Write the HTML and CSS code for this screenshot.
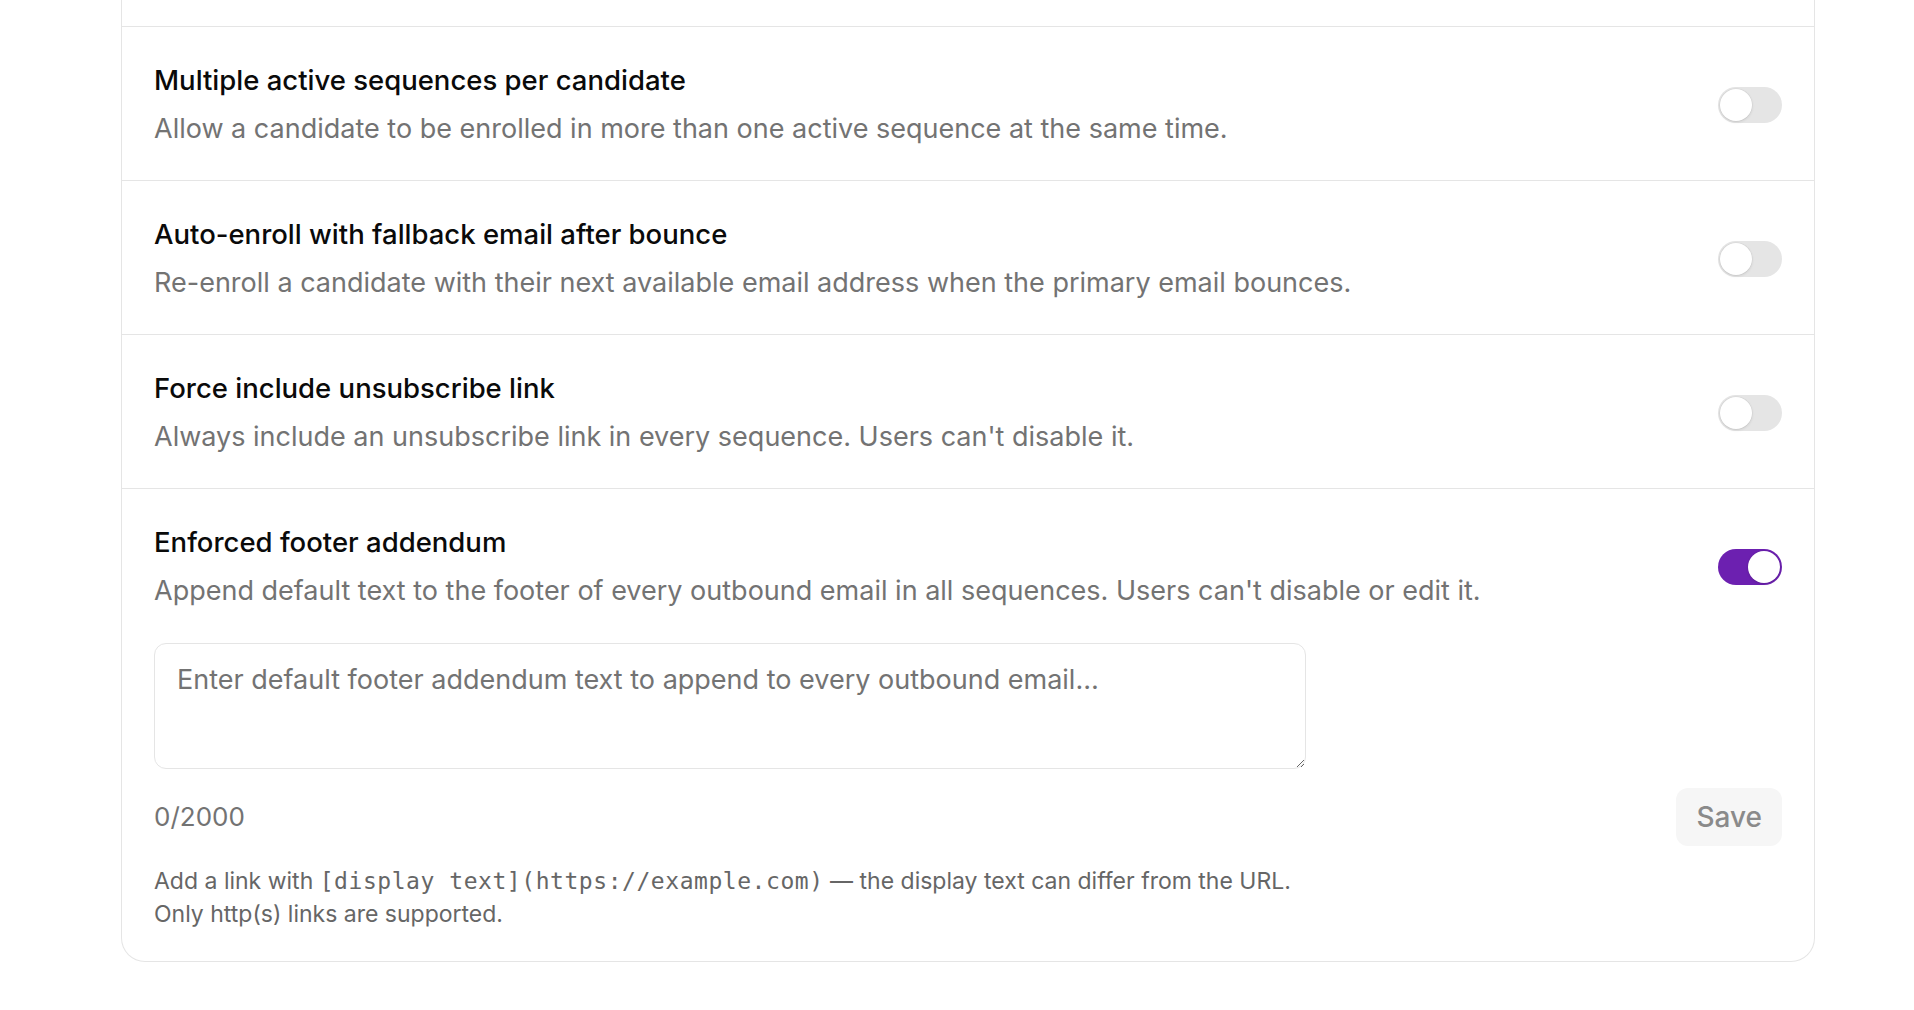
FILE: index.html
```html
<!DOCTYPE html>
<html lang="en">
<head>
<meta charset="utf-8">
<title>Sequence settings</title>
<link rel="stylesheet" href="styles.css">
</head>
<body>
<main class="page">
  <section class="card">
    <div class="row-tail"></div>

    <div class="setting">
      <div class="setting-text">
        <h3 class="setting-title">Multiple active sequences per candidate</h3>
        <p class="setting-desc">Allow a candidate to be enrolled in more than one active sequence at the same time.</p>
      </div>
      <button class="switch" role="switch" aria-checked="false"><span class="knob"></span></button>
    </div>

    <div class="setting">
      <div class="setting-text">
        <h3 class="setting-title">Auto-enroll with fallback email after bounce</h3>
        <p class="setting-desc">Re-enroll a candidate with their next available email address when the primary email bounces.</p>
      </div>
      <button class="switch" role="switch" aria-checked="false"><span class="knob"></span></button>
    </div>

    <div class="setting">
      <div class="setting-text">
        <h3 class="setting-title">Force include unsubscribe link</h3>
        <p class="setting-desc">Always include an unsubscribe link in every sequence. Users can't disable it.</p>
      </div>
      <button class="switch" role="switch" aria-checked="false"><span class="knob"></span></button>
    </div>

    <div class="setting setting-expanded">
      <div class="setting-head">
        <div class="setting-text">
          <h3 class="setting-title">Enforced footer addendum</h3>
          <p class="setting-desc">Append default text to the footer of every outbound email in all sequences. Users can't disable or edit it.</p>
        </div>
        <button class="switch is-on" role="switch" aria-checked="true"><span class="knob"></span></button>
      </div>
      <textarea class="addendum" placeholder="Enter default footer addendum text to append to every outbound email…"></textarea>
      <div class="addendum-footer">
        <span class="count">0/2000</span>
        <button class="save" disabled>Save</button>
      </div>
      <p class="hint">Add a link with <code>[display text](https://example.com)</code> — the display text can differ from the URL.<br>Only http(s) links are supported.</p>
    </div>
  </section>
</main>
</body>
</html>
```

FILE: styles.css
```css
html, body {
  margin: 0;
  background: #ffffff;
}

body {
  font-family: Inter, "Noto Sans", "Liberation Sans", sans-serif;
  color: #0a0a0a;
}

.page {
  padding-left: 121px;
}

/* settings card, scrolled so only its lower part is visible */
.card {
  width: 1694px;
  box-sizing: border-box;
  border: 1px solid #e5e5e5;
  border-top: none;
  border-radius: 0 0 24px 24px;
  background: #ffffff;
}

.row-tail {
  height: 26px;
  border-bottom: 1px solid #e5e5e5;
}

.setting {
  display: flex;
  align-items: center;
  justify-content: space-between;
  gap: 32px;
  padding: 35px 32px 33px;
  border-bottom: 1px solid #e5e5e5;
}

.setting-title {
  margin: 0;
  font-size: 27.5px;
  line-height: 36px;
  font-weight: 500;
  color: #0a0a0a;
}

.setting-desc {
  margin: 13px 0 0;
  font-size: 27px;
  line-height: 36px;
  color: #737373;
}

/* toggle switch */
.switch {
  flex: none;
  display: flex;
  align-items: center;
  width: 64px;
  height: 36px;
  padding: 2px;
  box-sizing: border-box;
  border: none;
  border-radius: 18px;
  background: #e5e5e5;
  cursor: pointer;
}

.knob {
  width: 32px;
  height: 32px;
  border-radius: 50%;
  background: #ffffff;
  box-shadow: 0 1px 3px rgba(0, 0, 0, 0.12), 0 0 0 0.5px rgba(0, 0, 0, 0.05);
}

.switch.is-on {
  background: #6c20b0;
  justify-content: flex-end;
}

/* expanded row with the footer editor */
.setting-expanded {
  display: block;
  border-bottom: none;
  padding-bottom: 30px;
}

.setting-head {
  display: flex;
  align-items: center;
  justify-content: space-between;
  gap: 32px;
}

.addendum {
  display: block;
  width: 1152px;
  height: 126px;
  box-sizing: border-box;
  margin-top: 34px;
  padding: 18px 22px;
  border: 1px solid #e5e5e5;
  border-radius: 12px;
  font-family: inherit;
  font-size: 27px;
  line-height: 36px;
  color: #0a0a0a;
  background: #ffffff;
  resize: vertical;
  outline: none;
}

.addendum::placeholder {
  color: #737373;
}

.addendum-footer {
  display: flex;
  align-items: center;
  justify-content: space-between;
  margin-top: 19px;
}

.count {
  font-size: 26px;
  line-height: 36px;
  color: #737373;
}

.save {
  height: 58px;
  padding: 0 20px;
  border: none;
  border-radius: 12px;
  background: #f6f6f6;
  color: #8a8a8a;
  font-family: inherit;
  font-size: 28px;
  font-weight: 500;
}

.hint {
  margin: 19px 0 0;
  font-size: 23px;
  line-height: 33px;
  color: #666666;
}

.hint code {
  font-family: "DejaVu Sans Mono", "Liberation Mono", monospace;
  font-size: 23px;
  letter-spacing: 0.55px;
}
```
